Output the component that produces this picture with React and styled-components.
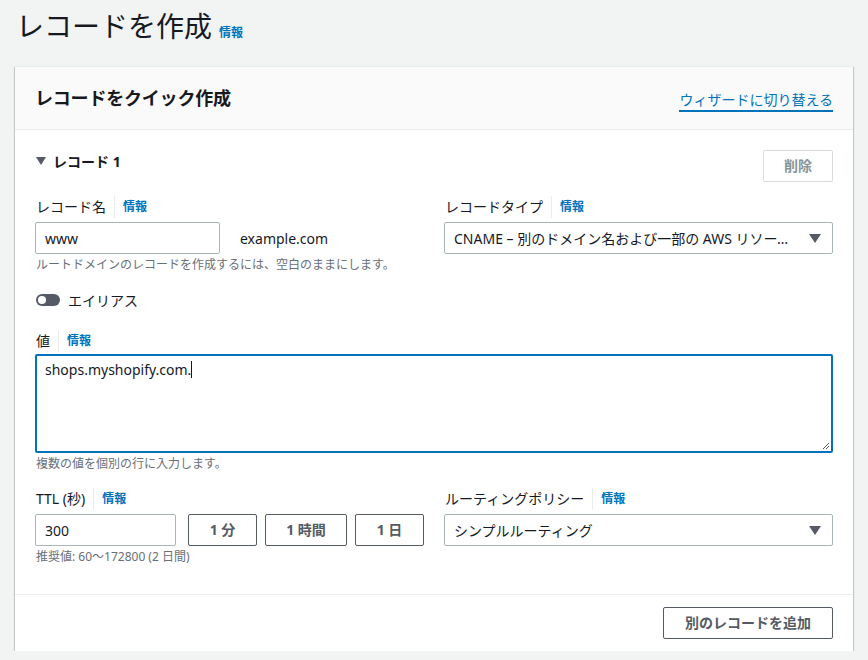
import React from "react";
import styled, { createGlobalStyle } from "styled-components";

const Global = createGlobalStyle`
  html, body { margin: 0; padding: 0; background: #f2f3f3; }
  body {
    font-family: "Noto Sans", "Noto Sans CJK JP", sans-serif;
    color: #16191f;
    font-size: 14px;
  }
  * { box-sizing: border-box; }
`;

const Page = styled.div`
  padding: 6px 15px 0 15px;
  width: 868px;
`;

const TitleRow = styled.div`
  display: flex;
  align-items: baseline;
  gap: 7px;
  padding-left: 1px;
  height: 60px;
`;

const Title = styled.h1`
  margin: 0;
  font-size: 28px;
  font-weight: 400;
  line-height: 40px;
  color: #16191f;
`;

const Info = styled.a`
  font-size: 12px;
  font-weight: 700;
  color: #0073bb;
  text-decoration: none;
  line-height: 16px;
`;

const Card = styled.section`
  width: 838px;
  background: #fff;
  box-shadow: 0 1px 1px 0 rgba(0, 28, 36, 0.3), 1px 1px 1px 0 rgba(0, 28, 36, 0.15),
    -1px 1px 1px 0 rgba(0, 28, 36, 0.15);
  border-top: 1px solid #eaeded;
`;

const CardHeader = styled.header`
  display: flex;
  justify-content: space-between;
  align-items: center;
  height: 63px;
  padding: 0 20px 0 20px;
  background: #fafafa;
  border-bottom: 1px solid #eaeded;
`;

const CardTitle = styled.h2`
  margin: 0;
  font-size: 18px;
  font-weight: 700;
  line-height: 22px;
  letter-spacing: -0.2px;
`;

const SwitchLink = styled.a`
  font-size: 14px;
  color: #0073bb;
  text-decoration: none;
  border-bottom: 2px solid #0073bb;
  line-height: 18px;
  padding-bottom: 1px;
  margin-top: 6px;
`;

const Body = styled.div`
  padding: 20px 20px 12px 20px;
`;

const RecordHead = styled.div`
  display: flex;
  justify-content: space-between;
  align-items: center;
  height: 32px;
  margin-bottom: 14px;
`;

const RecordTitle = styled.div`
  display: flex;
  align-items: center;
  gap: 7px;
  font-weight: 700;
  font-size: 14px;
  padding-left: 1px;
  margin-top: -10px;
`;

const Caret = styled.span`
  width: 0;
  height: 0;
  border-left: 5px solid transparent;
  border-right: 5px solid transparent;
  border-top: 8px solid #545b64;
`;

const Button = styled.button`
  height: 32px;
  width: ${(p) => p.$w}px;
  margin-left: ${(p) => p.$ml || 0}px;
  padding: 0;
  background: #fff;
  border: 1px solid ${(p) => (p.disabled ? "#d5dbdb" : "#545b64")};
  color: ${(p) => (p.disabled ? "#879596" : "#545b64")};
  border-radius: 2px;
  font-family: inherit;
  font-size: 14px;
  font-weight: 700;
  line-height: 20px;
  cursor: pointer;
  flex-shrink: 0;
`;

const Grid = styled.div`
  display: grid;
  grid-template-columns: 389px 389px;
  column-gap: 20px;
`;

const Field = styled.div`
  display: flex;
  flex-direction: column;
  margin-bottom: ${(p) => p.$mb || 0}px;
`;

const LabelRow = styled.div`
  display: flex;
  align-items: center;
  height: 22px;
  margin-bottom: ${(p) => (p.$mb !== undefined ? p.$mb : 4)}px;
`;

const Label = styled.label`
  font-size: 14px;
  line-height: 22px;
  color: #16191f;
  padding-left: 1px;
`;

const InfoDivided = styled(Info)`
  border-left: 1px solid #eaeded;
  padding-left: 8px;
  margin-left: 8px;
  line-height: 22px;
`;

const InputRow = styled.div`
  display: flex;
  align-items: center;
  gap: ${(p) => p.$gap || 8}px;
`;

const Input = styled.div`
  width: ${(p) => p.$w}px;
  height: 32px;
  border: 1px solid #aab7b8;
  border-radius: 2px;
  padding: 0 9px;
  display: flex;
  align-items: center;
  font-size: 14px;
  color: #16191f;
  flex-shrink: 0;
`;

const Suffix = styled.span`
  font-size: 14px;
  margin-left: 12px;
`;

const Hint = styled.div`
  font-size: 12px;
  line-height: 16px;
  color: #687078;
  margin-top: 3px;
  padding-left: 1px;
`;

const Select = styled.div`
  height: 32px;
  border: 1px solid #aab7b8;
  border-radius: 2px;
  padding: 0 10px 0 9px;
  display: flex;
  align-items: center;
  justify-content: space-between;
  font-size: 14px;
  color: #16191f;
  gap: 12px;
`;

const SelectText = styled.span`
  white-space: nowrap;
  overflow: hidden;
  text-overflow: ellipsis;
`;

const SelectArrow = styled.span`
  flex-shrink: 0;
  width: 0;
  height: 0;
  border-left: 6px solid transparent;
  border-right: 6px solid transparent;
  border-top: 9px solid #545b64;
  margin-right: 1px;
`;

const ToggleRow = styled.div`
  display: flex;
  align-items: center;
  gap: 8px;
  height: 20px;
  margin: 17px 0 20px 1px;
`;

const Toggle = styled.span`
  width: 24px;
  height: 12px;
  border-radius: 6px;
  background: #545b64;
  position: relative;
  &::after {
    content: "";
    position: absolute;
    left: 2px;
    top: 2px;
    width: 8px;
    height: 8px;
    border-radius: 50%;
    background: #fff;
  }
`;

const TextArea = styled.div`
  position: relative;
  height: 99px;
  border: 2px solid #0073bb;
  border-radius: 2px;
  padding: 3px 8px;
  font-size: 14px;
  line-height: 22px;
`;

const TextCaret = styled.span`
  display: inline-block;
  width: 1px;
  height: 17px;
  background: #16191f;
  vertical-align: -3px;
`;

const Grip = styled.svg`
  position: absolute;
  right: 1px;
  bottom: 1px;
`;

const Spacer = styled.div`
  height: ${(p) => p.$h}px;
`;

const Footer = styled.footer`
  display: flex;
  justify-content: flex-end;
  padding: 12px 20px 12px 20px;
  border-top: 1px solid #eaeded;
`;

export default function App() {
  return (
    <>
      <Global />
      <Page>
        <TitleRow>
          <Title>レコードを作成</Title>
          <Info href="#">情報</Info>
        </TitleRow>
        <Card>
          <CardHeader>
            <CardTitle>レコードをクイック作成</CardTitle>
            <SwitchLink href="#">ウィザードに切り替える</SwitchLink>
          </CardHeader>
          <Body>
            <RecordHead>
              <RecordTitle>
                <Caret />
                レコード 1
              </RecordTitle>
              <Button disabled $w={70}>削除</Button>
            </RecordHead>
            <Grid>
              <Field>
                <LabelRow>
                  <Label>レコード名</Label>
                  <InfoDivided href="#">情報</InfoDivided>
                </LabelRow>
                <InputRow $gap={8}>
                  <Input $w={185}>www</Input>
                  <Suffix>example.com</Suffix>
                </InputRow>
                <Hint>ルートドメインのレコードを作成するには、空白のままにします。</Hint>
              </Field>
              <Field>
                <LabelRow>
                  <Label>レコードタイプ</Label>
                  <InfoDivided href="#">情報</InfoDivided>
                </LabelRow>
                <Select>
                  <SelectText>CNAME – 別のドメイン名および一部の AWS リソースにトラフィックをルーティングします</SelectText>
                  <SelectArrow />
                </Select>
              </Field>
            </Grid>
            <ToggleRow>
              <Toggle />
              <span>エイリアス</span>
            </ToggleRow>
            <Field $mb={16}>
              <LabelRow $mb={2}>
                <Label>値</Label>
                <InfoDivided href="#">情報</InfoDivided>
              </LabelRow>
              <TextArea>
                shops.myshopify.com.
                <TextCaret />
                <Grip width="8" height="8" viewBox="0 0 8 8">
                  <path d="M7 1 L1 7 M7 4 L4 7" stroke="#545b64" strokeWidth="1" />
                </Grip>
              </TextArea>
              <Hint>複数の値を個別の行に入力します。</Hint>
            </Field>
            <Grid>
              <Field>
                <LabelRow>
                  <Label>TTL (秒)</Label>
                  <InfoDivided href="#">情報</InfoDivided>
                </LabelRow>
                <InputRow $gap={8}>
                  <Input $w={141}>300</Input>
                  <Button $w={69} $ml={4}>1 分</Button>
                  <Button $w={82}>1 時間</Button>
                  <Button $w={69}>1 日</Button>
                </InputRow>
                <Hint>推奨値: 60～172800 (2 日間)</Hint>
              </Field>
              <Field>
                <LabelRow>
                  <Label>ルーティングポリシー</Label>
                  <InfoDivided href="#">情報</InfoDivided>
                </LabelRow>
                <Select>
                  <SelectText>シンプルルーティング</SelectText>
                  <SelectArrow />
                </Select>
              </Field>
            </Grid>
            <Spacer $h={17} />
          </Body>
          <Footer>
            <Button $w={170}>別のレコードを追加</Button>
          </Footer>
        </Card>
      </Page>
    </>
  );
}
